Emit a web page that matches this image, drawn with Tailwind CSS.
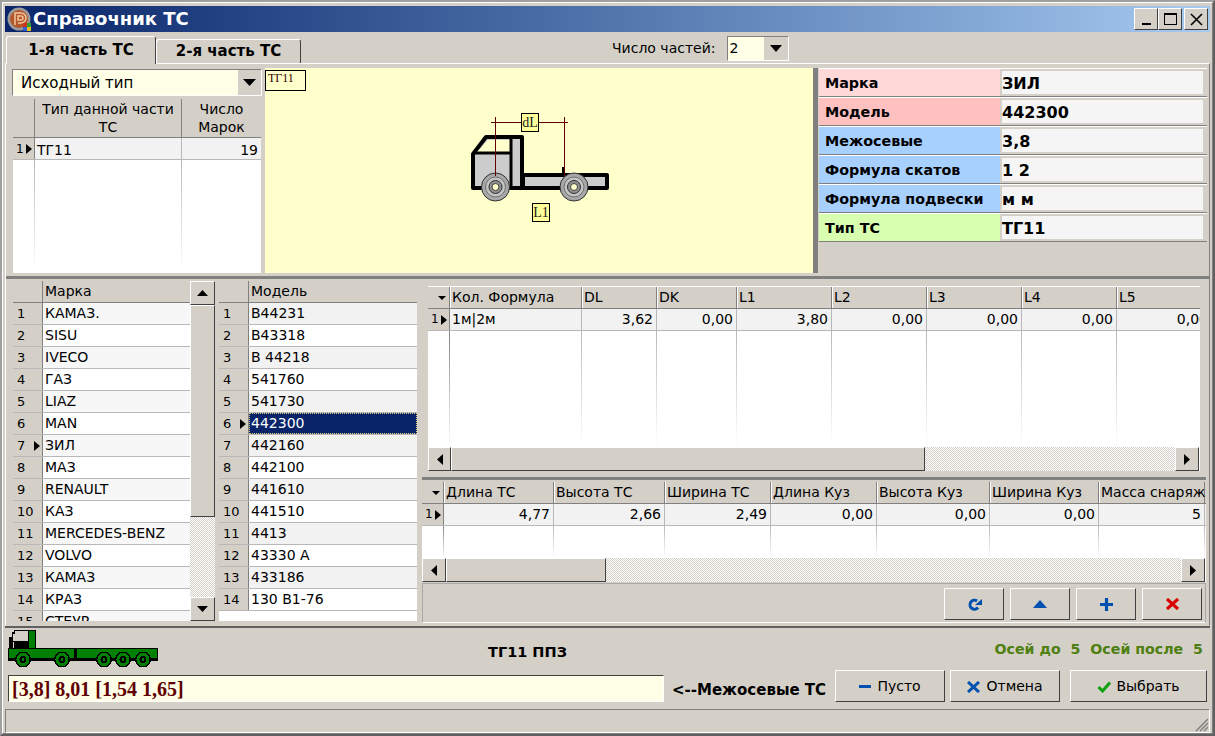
<!DOCTYPE html>
<html lang="ru">

<head>
    <meta charset="UTF-8">
    <title>Справочник ТС</title>
    <script src="https://cdn.jsdelivr.net/npm/@tailwindcss/browser@4"></script>
</head>

<body class="bg-[#d4d0c8]">
    <div class="w-[1215px] h-[736px] overflow-hidden bg-[#d4d0c8] border-2 border-t-[#a0a0a0] border-l-[#a0a0a0] border-r-[#606060] border-b-[#606060] font-['DejaVu_Sans',sans-serif] text-black">
        <div class="w-[1211px] h-[732px] pt-[3px] pl-[2px] border border-t-white border-l-white border-r-[#808080] border-b-[#808080]">

            <!-- title bar -->
            <div class="w-[1205px] h-[26px] flex items-center bg-gradient-to-r from-[#0a246a] to-[#a6caf0]">
                <svg class="ml-[2px] shrink-0" width="25" height="25" viewBox="0 0 25 25">
                    <circle cx="12" cy="12" r="11.5" fill="#9a9a9a" />
                    <circle cx="12" cy="12" r="9" fill="#b4562a" />
                    <path d="M8 18V6h6a5 5 0 0 1 0 10H11M11 9h3a2 2 0 0 1 0 4h-3z" fill="none" stroke="#f0c8a0" stroke-width="1.5" />
                    <rect x="16" y="16" width="4" height="4" fill="#d03020" />
                    <rect x="20" y="16" width="4" height="4" fill="#30a030" />
                    <rect x="16" y="20" width="4" height="4" fill="#3060d0" />
                    <rect x="20" y="20" width="4" height="4" fill="#e0c020" />
                </svg>
                <span class="ml-px text-[18px] font-bold text-white leading-none">Справочник ТС</span>
                <div class="ml-auto mr-[2px] flex">
                    <div class="w-[24px] h-[22px] flex items-end justify-center pb-[4px] bg-[#d4d0c8] border border-t-white border-l-white border-r-[#404040] border-b-[#404040]"><div class="w-[9px] h-[2px] bg-black"></div></div>
                    <div class="w-[24px] h-[22px] flex items-center justify-center bg-[#d4d0c8] border border-t-white border-l-white border-r-[#404040] border-b-[#404040]"><div class="w-[13px] h-[12px] border border-t-2 border-black"></div></div>
                    <div class="ml-[2px] w-[24px] h-[22px] flex items-center justify-center bg-[#d4d0c8] border border-t-white border-l-white border-r-[#404040] border-b-[#404040]">
                        <svg width="13" height="13" viewBox="0 0 13 13"><path d="M1 1l11 11M12 1L1 12" stroke="#000" stroke-width="1.6" /></svg>
                    </div>
                </div>
            </div>

            <!-- tabs -->
            <div class="w-[1205px] h-[31px] flex items-end relative">
                <div class="ml-px w-[150px] h-[28px] flex items-center justify-center text-[15px] font-bold bg-[#d4d0c8] border border-b-0 border-t-white border-l-white border-r-[#404040] rounded-t-[3px] relative top-px z-10">1-я часть ТС</div>
                <div class="w-[145px] h-[24px] flex items-center justify-center text-[15px] font-bold bg-[#d4d0c8] border border-b-0 border-t-white border-l-white border-r-[#404040] rounded-t-[3px]">2-я часть ТС</div>
                <div class="absolute left-[607px] top-[5px] h-[22px] flex items-center gap-[11px]">
                    <span class="text-[14px] leading-none">Число частей:</span>
                    <div class="w-[62px] h-[25px] flex items-center bg-[#ffffe8] border border-t-[#808080] border-l-[#808080] border-r-white border-b-white pl-[2px] text-[14px]">2
                        <div class="ml-auto w-[24px] h-[23px] bg-[#d4d0c8] flex items-center justify-center">
                            <svg width="12" height="7"><path d="M0 0h12L6 7z" /></svg>
                        </div>
                    </div>
                </div>
            </div>

            <!-- page -->
            <div class="w-[1205px] h-[563px] border border-t-white border-l-white border-r-[#808080] border-b-[#d4d0c8]">
                <!-- upper part -->
                <div class="flex h-[206px] mt-[4px]">
                    <div class="ml-[6px] w-[250px] flex flex-col shrink-0">
                        <div class="w-[250px] h-[27px] mt-px flex items-center bg-[#ffffe8] border border-t-[#808080] border-l-[#808080] border-r-white border-b-white pl-[8px] text-[15px]"><span class="pt-px">Исходный тип</span>
                            <div class="ml-auto w-[23px] h-[25px] bg-[#d4d0c8] flex items-center justify-center">
                                <svg width="13" height="7"><path d="M0 0h13L6.500 7z" /></svg>
                            </div>
                        </div>
                        <div class="mt-[3px] ml-px w-[248px] h-[174px] bg-white text-[14px] leading-[18px]">
                            <div class="flex h-[39px] bg-[#d4d0c8] border-b border-[#808080]">
                                <div class="w-[22px] border-r border-[#808080]"></div>
                                <div class="w-[147px] border-r border-[#808080] text-center pt-px">Тип данной части ТС</div>
                                <div class="w-[79px] text-center pt-px">Число Марок</div>
                            </div>
                            <div class="flex h-[22px] leading-[24px] bg-[#f2f2f2] border-b border-[#b8b8b8]">
                                <div class="w-[22px] flex items-center gap-[2px] pl-[3px] bg-[#d4d0c8] border-r border-[#808080] text-[12px]">1<svg width="6" height="10"><path d="M0 0l6 5-6 5z" /></svg></div>
                                <div class="w-[147px] pl-[2px] border-r border-[#b8b8b8]">ТГ11</div>
                                <div class="w-[79px] text-right pr-[3px]">19</div>
                            </div>
                            <div class="flex h-[112px]">
                                <div class="w-[22px] border-r border-transparent [border-image:linear-gradient(#b8b8b8,#fff)_1]"></div>
                                <div class="w-[147px] border-r border-transparent [border-image:linear-gradient(#b8b8b8,#fff)_1]"></div>
                            </div>
                        </div>
                    </div>

                    <!-- scheme -->
                    <div class="ml-[3px] w-[548px] h-[205px] relative bg-[#ffffcc] shrink-0">
                        <div class="absolute left-0 top-[2px] w-[41px] h-[21px] border border-black pl-[2px] font-['Liberation_Serif',serif] text-[12px] leading-[15px] text-[#300000]">ТГ11</div>
                        <svg class="absolute left-0 top-0" width="548" height="205" viewBox="265 68 548 205">
                            <path d="M473 154L486 137H522V188H473Z" fill="#cccccc" stroke="#000" stroke-width="4" stroke-linejoin="round" />
                            <path d="M477 152L488 140H510V152Z" fill="#ffffcc" />
                            <path d="M473 153H511M511 137V188" stroke="#000" stroke-width="3" />
                            <rect x="523" y="175" width="84" height="13" fill="#cccccc" stroke="#000" stroke-width="4" stroke-linejoin="round" />
                            <path d="M563.500 167V176" stroke="#000" stroke-width="3" />
                            <g>
                                <circle cx="495.500" cy="187" r="14" fill="#a8a8a8" stroke="#303030" stroke-width="1" />
                                <circle cx="495.500" cy="187" r="10" fill="#c4c4c4" stroke="#707070" />
                                <circle cx="495.500" cy="187" r="6.500" fill="#909090" stroke="#303030" />
                                <circle cx="495.500" cy="187" r="3.500" fill="#ffffcc" stroke="#404040" />
                            </g>
                            <g>
                                <circle cx="574" cy="187" r="14" fill="#a8a8a8" stroke="#303030" stroke-width="1" />
                                <circle cx="574" cy="187" r="10" fill="#c4c4c4" stroke="#707070" />
                                <circle cx="574" cy="187" r="6.500" fill="#909090" stroke="#303030" />
                                <circle cx="574" cy="187" r="3.500" fill="#ffffcc" stroke="#404040" />
                            </g>
                            <path d="M491 122.500H568M495.500 117V176M564.500 117V176" stroke="#600000" fill="none" />
                            <rect x="521.500" y="113.500" width="17" height="18" fill="#ffff99" stroke="#000" />
                            <text x="530" y="127" text-anchor="middle" font-family="Liberation Serif" font-size="14" fill="#202020">dL</text>
                            <rect x="532.500" y="203.500" width="17" height="18" fill="#ffff99" stroke="#000" />
                            <text x="541" y="217" text-anchor="middle" font-family="Liberation Serif" font-size="14" fill="#202020">L1</text>
                        </svg>
                    </div>
                    <div class="w-[5px] h-[205px] bg-[#808080] shrink-0"></div>

                    <!-- properties -->
                    <div class="ml-px w-[388px] font-bold" id="props"></div>
                </div>

                <div class="h-[3px] mt-[2px] bg-[#808080]"></div>

                <!-- lower part -->
                <div class="flex mt-[2px] h-[342px]">
                    <div class="ml-[7px] w-[177px] h-[340px] overflow-hidden bg-white shrink-0 text-[14px]" id="brands"></div>
                    <!-- vertical scrollbar -->
                    <div class="w-[25px] h-[340px] flex flex-col shrink-0">
                        <div class="h-[24px] flex items-center justify-center bg-[#d4d0c8] border border-t-white border-l-white border-r-[#404040] border-b-[#404040]"><svg width="11" height="6"><path d="M5.500 0L11 6H0z" /></svg></div>
                        <div class="h-[212px] bg-[#d4d0c8] border border-t-white border-l-white border-r-[#404040] border-b-[#404040]"></div>
                        <div class="flex-1 bg-[repeating-conic-gradient(#ffffff_0_25%,#d4d0c8_0_50%)] bg-[length:2px_2px]"></div>
                        <div class="h-[24px] flex items-center justify-center bg-[#d4d0c8] border border-t-white border-l-white border-r-[#404040] border-b-[#404040]"><svg width="11" height="6"><path d="M0 0H11L5.500 6z" /></svg></div>
                    </div>
                    <div class="ml-[4px] w-[198px] h-[340px] overflow-hidden bg-white shrink-0 text-[14px]" id="models"></div>

                    <div class="ml-[5px] w-[784px] flex flex-col shrink-0 text-[14px]">
                        <div class="ml-[6px] mt-[5px] w-[772px] h-[186px] flex flex-col bg-white border-t border-t-white" id="grid1"></div>
                        <div class="h-[3px] mt-[6px] bg-[#808080]"></div>
                        <div class="mt-[2px] w-[784px] h-[100px] flex flex-col bg-white" id="grid2"></div>
                        <div class="mt-px h-[40px] flex justify-end items-start gap-[6px] pr-[3px] pt-[4px] border border-[#a8a8a8] border-b-white">
                            <button class="w-[60px] h-[32px] flex items-center justify-center bg-[#d4d0c8] border border-t-white border-l-white border-r-[#404040] border-b-[#404040]">
                                <svg width="15" height="13" viewBox="0 0 15 13"><path d="M11 9.500A4.500 4.500 0 1 1 10 3" fill="none" stroke="#0050b0" stroke-width="3" /><path d="M8 7h7V1z" fill="#0050b0" /></svg>
                            </button>
                            <button class="w-[60px] h-[32px] flex items-center justify-center bg-[#d4d0c8] border border-t-white border-l-white border-r-[#404040] border-b-[#404040]">
                                <svg width="14" height="8"><path d="M7 0l7 8H0z" fill="#0050b0" /></svg>
                            </button>
                            <button class="w-[60px] h-[32px] flex items-center justify-center bg-[#d4d0c8] border border-t-white border-l-white border-r-[#404040] border-b-[#404040]">
                                <svg width="13" height="13"><path d="M6.500 0v13M0 6.500h13" stroke="#0050b0" stroke-width="3.200" /></svg>
                            </button>
                            <button class="w-[60px] h-[32px] flex items-center justify-center bg-[#d4d0c8] border border-t-white border-l-white border-r-[#404040] border-b-[#404040]">
                                <svg width="13" height="12"><path d="M1 1l11 10M12 1L1 11" stroke="#d80000" stroke-width="3.200" /></svg>
                            </button>
                        </div>
                    </div>
                </div>
            </div>

            <!-- bottom -->
            <div class="w-[1205px] h-[2px] bg-[#606060]"></div>
            <div class="w-[1205px] h-[41px] flex items-start">
                <svg class="ml-[3px] mt-[2px] shrink-0" width="150" height="39" viewBox="8 630 150 39" shape-rendering="crispEdges">
                    <!-- cab -->
                    <rect x="14" y="630" width="22" height="18" fill="#000" />
                    <rect x="12" y="632" width="3" height="10" fill="#000" />
                    <rect x="9" y="637" width="4" height="11" fill="#000" />
                    <rect x="15" y="631" width="13" height="10" fill="#d4d0c8" />
                    <rect x="13" y="634" width="2" height="7" fill="#d4d0c8" />
                    <rect x="29" y="631" width="6" height="17" fill="#008000" />
                    <!-- platforms -->
                    <rect x="8" y="648" width="150" height="13" fill="#000" />
                    <rect x="9" y="649" width="65" height="9" fill="#008000" />
                    <rect x="77" y="649" width="80" height="9" fill="#008000" />
                    <!-- wheels -->
                    <g fill="#000">
                        <circle cx="23" cy="659.500" r="8" />
                        <circle cx="62" cy="659.500" r="8" />
                        <circle cx="104" cy="659.500" r="8" />
                        <circle cx="123" cy="659.500" r="8" />
                        <circle cx="143" cy="659.500" r="8" />
                    </g>
                    <g fill="#008000">
                        <circle cx="23" cy="659.500" r="6.500" />
                        <circle cx="62" cy="659.500" r="6.500" />
                        <circle cx="104" cy="659.500" r="6.500" />
                        <circle cx="123" cy="659.500" r="6.500" />
                        <circle cx="143" cy="659.500" r="6.500" />
                    </g>
                    <g fill="#000">
                        <circle cx="23" cy="659.500" r="3.500" />
                        <circle cx="62" cy="659.500" r="3.500" />
                        <circle cx="104" cy="659.500" r="3.500" />
                        <circle cx="123" cy="659.500" r="3.500" />
                        <circle cx="143" cy="659.500" r="3.500" />
                    </g>
                    <g fill="#008000">
                        <rect x="22" y="658" width="2" height="3" />
                        <rect x="61" y="658" width="2" height="3" />
                        <rect x="103" y="658" width="2" height="3" />
                        <rect x="122" y="658" width="2" height="3" />
                        <rect x="142" y="658" width="2" height="3" />
                    </g>
                </svg>
                <span class="ml-[330px] mt-[15px] text-[14.500px] font-bold leading-[18px] whitespace-nowrap">ТГ11 ППЗ</span>
                <span class="ml-auto mr-[7px] mt-[12px] text-[14.200px] font-bold text-[#4f7f10] leading-[18px] whitespace-pre">Осей до  5  Осей после  5</span>
            </div>
            <div class="w-[1205px] h-[36px] flex items-start">
                <div class="mt-[6px] ml-[3px] w-[656px] h-[27px] flex items-center pl-[3px] bg-[#ffffe8] border border-t-[#404040] border-l-[#404040] border-r-white border-b-white font-['Liberation_Serif',serif] font-bold text-[20px] text-[#600000]">[3,8] 8,01 [1,54 1,65]</div>
                <span class="ml-[8px] mt-[12px] w-[155px] text-[15px] font-bold leading-[18px] whitespace-nowrap">&lt;--Межосевые ТС</span>
                <button class="ml-[8px] mt-px w-[110px] h-[32px] pt-px flex items-center justify-center gap-[6px] bg-[#d4d0c8] border border-t-white border-l-white border-r-[#404040] border-b-[#404040] text-[14px]">
                    <span class="w-[12px] h-[3px] bg-[#0050b0]"></span>Пусто
                </button>
                <button class="ml-[5px] mt-px w-[110px] h-[32px] pt-px flex items-center justify-center gap-[6px] bg-[#d4d0c8] border border-t-white border-l-white border-r-[#404040] border-b-[#404040] text-[14px]">
                    <svg width="13" height="12"><path d="M1 1l11 10M12 1L1 11" stroke="#0050b0" stroke-width="3" /></svg>Отмена
                </button>
                <button class="ml-[10px] mt-px w-[137px] h-[32px] pt-px flex items-center justify-center gap-[5px] bg-[#d4d0c8] border border-t-white border-l-white border-r-[#404040] border-b-[#404040] text-[14px]">
                    <svg width="14" height="12"><path d="M1.500 6l4 4L13 1.500" fill="none" stroke="#10a010" stroke-width="3" /></svg>Выбрать
                </button>
            </div>
            <div class="w-[1205px] mt-[4px] h-[24px] flex border border-t-[#808080] border-l-[#808080] border-r-white border-b-white relative">
                <svg class="absolute right-0 bottom-0" width="14" height="14"><path d="M13 1L1 13M13 5L5 13M13 9L9 13" stroke="#808080" stroke-width="1.500" /></svg>
            </div>
        </div>
    </div>

<script>
    var cols = {
        pink1: 'bg-[#ffd8d8]', pink2: 'bg-[#ffc0c0]', blue: 'bg-[#a8d0ff]', green: 'bg-[#d8ffb0]'
    };
    var props = [
        ['Марка', 'ЗИЛ', cols.pink1],
        ['Модель', '442300', cols.pink2],
        ['Межосевые', '3,8', cols.blue],
        ['Формула скатов', '1 2', cols.blue],
        ['Формула подвески', 'м м', cols.blue],
        ['Тип ТС', 'ТГ11', cols.green]
    ];
    var html = '';
    for (var p of props) {
        html += `<div class="flex h-[29px] border-b border-[#808080] border-t border-t-white">
            <div class="w-[181px] pl-[6px] text-[14.300px] leading-[29px] whitespace-nowrap ${p[2]}">${p[0]}</div>
            <div class="w-[205px] bg-[#f5f5f5] border-2 border-[#d4d0c8] text-[16px] leading-[25px]">${p[1]}</div>
        </div>`;
    }
    document.getElementById('props').innerHTML = html;

    function listGrid(title, rows, current, zebra) {
        var out = `<div class="flex h-[22px] leading-[21px] bg-[#d4d0c8] border-b border-[#808080]">
            <div class="w-[30px] border-r border-[#808080]"></div><div class="pl-[2px]">${title}</div></div>`;
        rows.forEach((r, i) => {
            var sel = r[1];
            var bg = i % 2 == 0 ? zebra : 'bg-white';
            out += `<div class="flex h-[22px] leading-[21px] border-b border-[#b8b8b8]">
                <div class="w-[30px] shrink-0 flex items-center justify-between pl-[4px] pr-[2px] bg-[#d4d0c8] border-r border-[#808080] text-[13px]">${i + 1}${i == current ? '<svg width="6" height="10"><path d="M0 0l6 5-6 5z" /></svg>' : ''}</div>
                <div class="flex-1 pl-[2px] whitespace-nowrap ${sel ? 'bg-[#0a246a] text-white outline-1 outline-dotted outline-[#e0d080] -outline-offset-1' : bg}">${r[0]}</div>
            </div>`;
        });
        return out;
    }

    var brands = ['КАМАЗ.', 'SISU', 'IVECO', 'ГАЗ', 'LIAZ', 'MAN', 'ЗИЛ', 'МАЗ', 'RENAULT', 'КАЗ', 'MERCEDES-BENZ', 'VOLVO', 'КАМАЗ', 'КРАЗ', 'СТЕУР'];
    var models = ['В44231', 'В43318', 'В 44218', '541760', '541730', '442300', '442160', '442100', '441610', '441510', '4413', '43330 А', '433186', '130 В1-76'];
    document.getElementById('brands').innerHTML = listGrid('Марка', brands.map(b => [b, false]), 6, 'bg-[#f7f7f7]');
    document.getElementById('models').innerHTML = listGrid('Модель', models.map((m, i) => [m, i == 5]), 5, 'bg-[#f2f2f2]');

    function wideGrid(el, idxW, columns, emptyH, barW, thumbW, leftW) {
        var head = `<div class="flex h-[22px] leading-[21px] shrink-0 bg-[#d4d0c8] border-b border-[#808080] overflow-hidden">
            <div class="shrink-0 flex justify-end items-center pr-[3px] border-r border-[#808080]" style="width:${idxW}px"><svg width="8" height="4"><path d="M0 0h8L4 4z" /></svg></div>`;
        var row = `<div class="flex h-[22px] leading-[21px] shrink-0 bg-[#f2f2f2] border-b border-[#b8b8b8] overflow-hidden">
            <div class="shrink-0 flex items-center gap-[2px] pl-[3px] bg-[#d4d0c8] border-r border-[#808080] text-[12px]" style="width:${idxW}px">1<svg width="6" height="10"><path d="M0 0l6 5-6 5z" /></svg></div>`;
        var empty = `<div class="flex shrink-0 overflow-hidden" style="height:${emptyH}px">
            <div class="shrink-0 border-r border-transparent [border-image:linear-gradient(#808080,#fff)_1]" style="width:${idxW}px"></div>`;
        for (var c of columns) {
            head += `<div class="shrink-0 pl-px whitespace-nowrap border-r border-[#808080] border-l border-l-white" style="width:${c[1]}px">${c[0]}</div>`;
            row += `<div class="shrink-0 pr-[3px] text-right whitespace-nowrap border-r border-[#b8b8b8] ${c[3] ? 'pl-[2px] !text-left' : ''}" style="width:${c[1]}px">${c[2]}</div>`;
            empty += `<div class="shrink-0 border-r border-transparent [border-image:linear-gradient(#b8b8b8,#fff)_1]" style="width:${c[1]}px"></div>`;
        }
        head += '</div>';
        row += '</div>';
        empty += '</div>';
        var bar = `<div class="flex h-[24px] shrink-0" style="width:${barW}px">
            <div class="shrink-0 flex items-center justify-center bg-[#d4d0c8] border border-t-white border-l-white border-r-[#404040] border-b-[#404040]" style="width:${leftW}px"><svg width="6" height="11"><path d="M6 0v11L0 5.500z" /></svg></div>
            <div class="shrink-0 bg-[#d4d0c8] border border-t-white border-l-white border-r-[#404040] border-b-[#404040]" style="width:${thumbW}px"></div>
            <div class="flex-1 bg-[repeating-conic-gradient(#ffffff_0_25%,#d4d0c8_0_50%)] bg-[length:2px_2px]"></div>
            <div class="shrink-0 w-[24px] flex items-center justify-center bg-[#d4d0c8] border border-t-white border-l-white border-r-[#404040] border-b-[#404040]"><svg width="6" height="11"><path d="M0 0v11L6 5.500z" /></svg></div>
        </div>`;
        document.getElementById(el).innerHTML = head + row + empty + bar;
    }

    wideGrid('grid1', 22, [
        ['Кол. Формула', 132, '1м|2м', true], ['DL', 75, '3,62'], ['DK', 80, '0,00'], ['L1', 95, '3,80'],
        ['L2', 95, '0,00'], ['L3', 95, '0,00'], ['L4', 95, '0,00'], ['L5', 95, '0,00']
    ], 116, 771, 474, 23);
    wideGrid('grid2', 22, [
        ['Длина ТС', 110, '4,77'], ['Высота ТС', 111, '2,66'], ['Ширина ТС', 106, '2,49'], ['Длина Куз', 106, '0,00'],
        ['Высота Куз', 113, '0,00'], ['Ширина Куз', 109, '0,00'], ['Масса снаряж', 106, '5']
    ], 32, 783, 160, 24);
</script>
</body>

</html>
